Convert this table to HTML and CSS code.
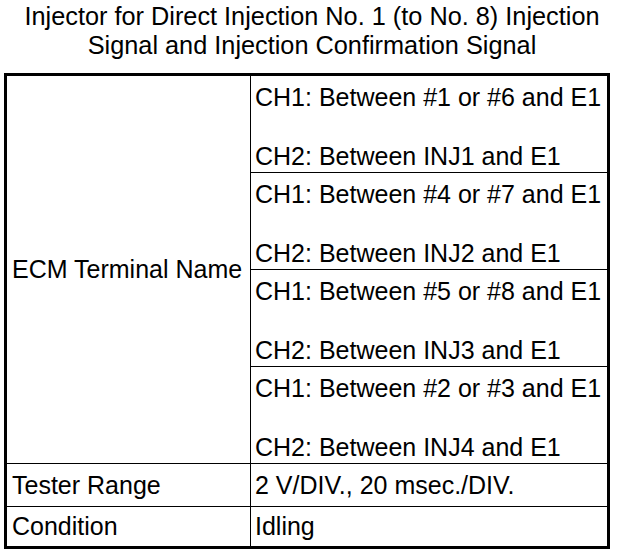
FILE: index.html
```html
<!DOCTYPE html>
<html>
<head>
<meta charset="utf-8">
<link rel="stylesheet" href="styles.css">
</head>
<body>
<h1 class="title">Injector for Direct Injection No. 1 (to No. 8) Injection<br>Signal and Injection Confirmation Signal</h1>
<table class="spec">
  <tr>
    <td class="label" rowspan="4">ECM Terminal Name</td>
    <td class="group"><div class="line">CH1: Between #1 or #6 and E1</div><div class="line">CH2: Between INJ1 and E1</div></td>
  </tr>
  <tr>
    <td class="group"><div class="line">CH1: Between #4 or #7 and E1</div><div class="line">CH2: Between INJ2 and E1</div></td>
  </tr>
  <tr>
    <td class="group"><div class="line">CH1: Between #5 or #8 and E1</div><div class="line">CH2: Between INJ3 and E1</div></td>
  </tr>
  <tr>
    <td class="group"><div class="line">CH1: Between #2 or #3 and E1</div><div class="line">CH2: Between INJ4 and E1</div></td>
  </tr>
  <tr class="tester">
    <td class="label">Tester Range</td>
    <td class="value">2 V/DIV., 20 msec./DIV.</td>
  </tr>
  <tr class="condition">
    <td class="label">Condition</td>
    <td class="value">Idling</td>
  </tr>
</table>
</body>
</html>
```
FILE: styles.css
```css
html, body {
  margin: 0;
  padding: 0;
  background: #fff;
  color: #000;
}
body {
  font-family: "Liberation Sans", Arial, sans-serif;
  width: 624px;
}
.title {
  margin: 0;
  padding-top: 2px;
  font-size: 25.3px;
  font-weight: normal;
  line-height: 29px;
  text-align: center;
}
.spec {
  margin: 13px 0 0 4px;
  width: 606px;
  border-collapse: collapse;
  border: 3px solid #000;
  font-size: 25px;
}
.spec td {
  border: 1px solid #000;
  padding: 0 0 0 4px;
  vertical-align: middle;
  white-space: nowrap;
}
.spec .label {
  width: 238px;
  padding-left: 5px;
}
.spec .group {
  vertical-align: top;
  padding-top: 6px;
  padding-bottom: 1px;
}
.line {
  line-height: 30px;
}
.line + .line {
  margin-top: 29px;
}
.tester td {
  height: 42px;
}
.condition td {
  height: 39px;
}
```
